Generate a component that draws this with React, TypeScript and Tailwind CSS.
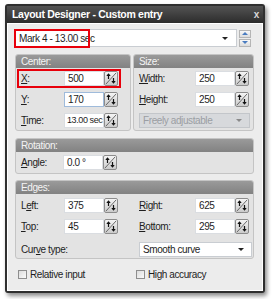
import React from "react";

// Small spin button: up arrow top-left, down arrow bottom-right
const Spin = () => (
  <svg width="14" height="15" viewBox="0 0 14 15" className="shrink-0">
    <defs>
      <linearGradient id="sg" x1="0" y1="0" x2="0" y2="1">
        <stop offset="0" stopColor="#f6f6f6" />
        <stop offset="1" stopColor="#c9c9c9" />
      </linearGradient>
    </defs>
    <rect x="0.5" y="0.5" width="13" height="14" rx="1.5" fill="url(#sg)" stroke="#8c8c8c" />
    <line x1="2" y1="13" x2="12" y2="2" stroke="#6a6a6a" strokeWidth="1" />
    <line x1="4.5" y1="3" x2="4.5" y2="8" stroke="#111" strokeWidth="1.2" />
    <path d="M2.3 5 L4.5 2.3 L6.7 5 Z" fill="#111" />
    <line x1="9.5" y1="7" x2="9.5" y2="12" stroke="#111" strokeWidth="1.2" />
    <path d="M7.3 10 L9.5 12.7 L11.7 10 Z" fill="#111" />
  </svg>
);

// Label with one underlined access key
const Key = ({ text, at }: { text: string; at: number }) => (
  <span>
    {text.slice(0, at)}
    <span className="underline underline-offset-1">{text[at]}</span>
    {text.slice(at + 1)}
  </span>
);

interface RowProps {
  text: string;
  at: number;
  value: string;
  labelW: string;
  focus?: boolean;
  tight?: boolean;
}

// One label + edit box + spin button
const Row = ({ text, at, value, labelW, focus, tight }: RowProps) => (
  <div className="flex items-center h-[15px]">
    <div className={labelW}>
      <Key text={text} at={at} />
    </div>
    <div
      className={`w-[40px] h-[15px] bg-white border flex items-center whitespace-nowrap ${
        focus ? "border-[#9fbbdb]" : "border-[#dadde1]"
      } ${tight ? "pl-[2px] text-[9px]" : "pl-[3px]"}`}
    >
      {value}
    </div>
    <Spin />
  </div>
);

// Group box with grey heading
const Group = ({
  title,
  className,
  children,
}: {
  title: string;
  className: string;
  children: React.ReactNode;
}) => (
  <div className={`border border-[#c4c4c4] rounded-[3px] bg-[#e3e3e3] overflow-hidden ${className}`}>
    <div className="h-[13px] bg-gradient-to-b from-[#9a9a9a] to-[#828282] text-[#f4f4f4] pl-[5px] leading-[13px]">
      {title}
    </div>
    {children}
  </div>
);

const Arrow = () => <span className="w-0 h-0 border-l-[3px] border-r-[3px] border-t-[3px] border-l-transparent border-r-transparent border-t-[#222]" />;

const Check = ({ label }: { label: string }) => (
  <div className="flex items-center gap-[3px]">
    <span className="w-[9px] h-[9px] border border-[#8e8e8e] bg-gradient-to-br from-[#dcdcdc] to-[#fafafa]" />
    <span>{label}</span>
  </div>
);

export default function App() {
  return (
    <div className="w-[272px] h-[299px] bg-white pt-[4px] pl-[5px] font-['Liberation_Sans',Arial,sans-serif] text-[10px] tracking-[-0.4px] text-[#1e1e1e]">
      <div className="w-[260px] h-[289px] border-2 border-[#2f2f2f] rounded-[3px] bg-[#ececec] shadow-[2px_3px_4px_rgba(0,0,0,0.45)] flex flex-col">
        {/* Title bar */}
        <div className="h-[17px] bg-gradient-to-b from-[#545454] to-[#2c2c2c] flex items-center justify-between pl-[5px] pr-[4px]">
          <span className="text-white font-bold text-[10.5px] tracking-[-0.3px]">Layout Designer - Custom entry</span>
          <span className="text-[#d8d8d8] font-bold text-[10px]">x</span>
        </div>

        {/* Body */}
        <div className="flex-1 px-[6px] pt-[5px] border border-white">
          {/* Entry combo */}
          <div className="flex items-center gap-[2px] h-[18px]">
            <div className="relative w-[223px] h-[18px] bg-white border border-[#c9cdd2] flex items-center justify-between pl-[4px] pr-[8px]">
              <span>Mark 4 - 13.00 sec</span>
              <Arrow />
              <div className="absolute -left-[1px] -top-[1px] w-[76px] h-[19px] border-2 border-[#e8000b]" />
            </div>
            <div className="flex flex-col gap-[1px]">
              <div className="w-[12px] h-[8px] border border-[#b5b5b5] bg-gradient-to-b from-[#f8f8f8] to-[#dcdcdc] flex items-center justify-center">
                <span className="w-0 h-0 border-l-[3px] border-r-[3px] border-b-[3px] border-l-transparent border-r-transparent border-b-[#4a7cc0]" />
              </div>
              <div className="w-[12px] h-[8px] border border-[#b5b5b5] bg-gradient-to-b from-[#f8f8f8] to-[#dcdcdc] flex items-center justify-center">
                <span className="w-0 h-0 border-l-[3px] border-r-[3px] border-t-[3px] border-l-transparent border-r-transparent border-t-[#4a7cc0]" />
              </div>
            </div>
          </div>

          <div className="ml-[1px] w-[239px]">
            {/* Center / Size */}
            <div className="flex gap-[2px] mt-[7px]">
              <Group title="Center:" className="w-[116px] h-[77px]">
                <div className="flex flex-col gap-[6px] pt-[3px] pl-[5px]">
                  <div className="relative">
                    <Row text="X:" at={0} value="500" labelW="w-[43px]" />
                    <div className="absolute -left-[4px] -top-[2px] w-[104px] h-[19px] border-2 border-[#e8000b]" />
                  </div>
                  <Row text="Y:" at={0} value="170" labelW="w-[43px]" focus />
                  <Row text="Time:" at={0} value="13.00 sec" labelW="w-[43px]" tight />
                </div>
              </Group>
              <Group title="Size:" className="w-[121px] h-[77px]">
                <div className="flex flex-col gap-[6px] pt-[3px] pl-[5px]">
                  <Row text="Width:" at={0} value="250" labelW="w-[56px]" />
                  <Row text="Height:" at={0} value="250" labelW="w-[56px]" />
                  <div className="w-[111px] h-[15px] bg-[#d7d9dc] border border-[#c3c6ca] flex items-center justify-between pl-[3px] pr-[7px] text-[#9b9ea3]">
                    <span>Freely adjustable</span>
                    <span className="w-0 h-0 border-l-[3px] border-r-[3px] border-t-[3px] border-l-transparent border-r-transparent border-t-[#8a8a8a]" />
                  </div>
                </div>
              </Group>
            </div>

            {/* Rotation */}
            <Group title="Rotation:" className="mt-[7px] h-[36px]">
              <div className="pt-[3px] pl-[5px]">
                <Row text="Angle:" at={0} value="0.0 °" labelW="w-[42px]" />
              </div>
            </Group>

            {/* Edges */}
            <Group title="Edges:" className="mt-[6px] h-[79px]">
              <div className="grid grid-cols-[118px_121px] gap-y-[6px] pt-[4px] pl-[5px]">
                <Row text="Left:" at={1} value="375" labelW="w-[43px]" />
                <Row text="Right:" at={0} value="625" labelW="w-[56px]" />
                <Row text="Top:" at={0} value="45" labelW="w-[43px]" />
                <Row text="Bottom:" at={0} value="295" labelW="w-[56px]" />
                <div className="flex items-center h-[15px] mt-[2px]">
                  <Key text="Curve type:" at={3} />
                </div>
                <div className="w-[113px] h-[15px] mt-[2px] bg-white border border-[#c9cdd2] flex items-center justify-between pl-[3px] pr-[7px]">
                  <span>Smooth curve</span>
                  <Arrow />
                </div>
              </div>
            </Group>

            {/* Options */}
            <div className="grid grid-cols-[118px_121px] mt-[8px] pl-[3px]">
              <Check label="Relative input" />
              <Check label="High accuracy" />
            </div>
          </div>
        </div>
      </div>
    </div>
  );
}
